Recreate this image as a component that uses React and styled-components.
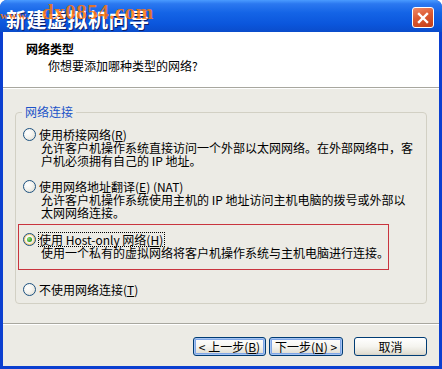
import styled, { createGlobalStyle } from 'styled-components'

const Global = createGlobalStyle`
  html, body { margin: 0; padding: 0; background: #fff; }
  body { font-family: "Noto Sans CJK SC", "DejaVu Sans", sans-serif; font-size: 12px; }
`

const Window = styled.div`
  position: relative;
  width: 442px;
  height: 369px;
  box-sizing: border-box;
  display: flex;
  flex-direction: column;
  background: #0b3fd0;
  border-radius: 7px 7px 0 0;
  overflow: hidden;
`

const TitleBar = styled.div`
  height: 32px;
  flex: none;
  display: flex;
  align-items: center;
  justify-content: space-between;
  padding: 0 8px 0 6px;
  background: linear-gradient(180deg, #4a9bff 0%, #2b78f0 12%, #1464e6 40%, #0b56dc 75%, #0a4ccb 100%);
`

const Title = styled.span`
  color: #fff;
  font-size: 20px;
  font-weight: bold;
  letter-spacing: 0.5px;
  padding-top: 6px;
  text-shadow: 1px 1px 0 #0a1d6a;
`

const Watermark = styled.div`
  position: absolute;
  left: 0;
  top: 0;
  font-family: "Liberation Serif", serif;
  font-weight: bold;
  color: rgba(255, 118, 10, 0.85);
  white-space: nowrap;
  pointer-events: none;
  & small { font-size: 11px; letter-spacing: 1px; }
  & span { font-size: 21px; letter-spacing: 0.5px; margin-left: 12px; }
`

const CloseBtn = styled.div`
  width: 20px;
  height: 19px;
  margin-top: 3px;
  border: 1px solid #fff;
  border-radius: 3px;
  background: linear-gradient(160deg, #f08a68 0%, #dc5a32 45%, #c23c17 100%);
  display: flex;
  align-items: center;
  justify-content: center;
`

const Client = styled.div`
  flex: 1;
  margin: 0 3px 3px;
  background: #ecebe5;
  display: flex;
  flex-direction: column;
`

const Header = styled.div`
  height: 56px;
  flex: none;
  background: #fff;
  padding: 9px 0 0 23px;
  box-sizing: border-box;
  border-bottom: 1px solid #a8a79f;
  box-shadow: 0 1px 0 #fff;
`

const HeadTitle = styled.div`
  font-weight: bold;
  line-height: 15px;
  color: #000;
`

const HeadSub = styled.div`
  margin: 2px 0 0 22px;
  line-height: 15px;
  color: #000;
`

const Body = styled.div`
  flex: 1;
  padding: 17px 12px 0;
`

const Group = styled.fieldset`
  margin: 0;
  padding: 0 0 0 1px;
  height: 199px;
  box-sizing: border-box;
  border: 1px solid #d2d0c4;
  border-radius: 4px;
  display: flex;
  flex-direction: column;
`

const Legend = styled.legend`
  margin-left: 5px;
  padding: 0 3px;
  color: #1d54c8;
  line-height: 14px;
`

const Option = styled.div`
  margin-top: ${p => p.$mt || 0}px;
  padding-left: ${p => (p.$pl == null ? 6 : p.$pl)}px;
  display: grid;
  grid-template-columns: 13px 1fr;
  column-gap: 3px;
  line-height: 13px;
  color: #000;
`

const Radio = styled.span`
  width: 13px;
  height: 13px;
  box-sizing: border-box;
  border-radius: 50%;
  border: 1px solid #1c5180;
  background: radial-gradient(circle at 35% 35%, #fff 0%, #f4f3ee 45%, #d9d6ca 100%);
  display: flex;
  align-items: center;
  justify-content: center;
  &::after {
    content: '';
    display: ${p => (p.$checked ? 'block' : 'none')};
    width: 5px;
    height: 5px;
    border-radius: 50%;
    background: radial-gradient(circle at 35% 35%, #8fe07a 0%, #3ea82a 60%, #218c12 100%);
  }
  ${p => p.$checked && 'box-shadow: inset 0 0 0 1px #f7c86a;'}
`

const Label = styled.span`
  white-space: nowrap;
  ${p => p.$focus && 'outline: 1px dotted #000; outline-offset: 0; justify-self: start; padding-right: 1px;'}
`

const Desc = styled.div`
  grid-column: 2;
  padding-left: 2px;
  white-space: nowrap;
`

const Highlight = styled.div`
  margin: 5px 0 0 1px;
  width: 371px;
  box-sizing: border-box;
  border: 1px solid #c9343e;
  padding: 8px 0 10px;
`

const Footer = styled.div`
  flex: none;
  height: 43px;
  box-sizing: border-box;
  border-top: 1px solid #a8a79f;
  box-shadow: inset 0 1px 0 #fff;
  display: flex;
  justify-content: flex-end;
  align-items: flex-start;
  padding: 13px 12px 0 0;
`

const Button = styled.button`
  width: ${p => p.$w || 73}px;
  height: 19px;
  margin-left: ${p => p.$ml || 0}px;
  padding: 0;
  font-family: inherit;
  font-size: 12px;
  line-height: 15px;
  color: #000;
  border: 1px solid #003c74;
  border-radius: 3px;
  background: linear-gradient(180deg, #ffffff 0%, #f5f4ef 50%, #e2dfd4 90%, #d4d0c4 100%);
  box-shadow: ${p => (p.$hl ? 'inset 0 0 0 1px #a6c4f2, inset 0 0 0 2px #7fa6e6' : 'none')};
  & u { text-decoration: underline; }
`

const Opt = ({ mt, pl, checked, focus, label, lines }) => (
  <Option $mt={mt} $pl={pl}>
    <Radio $checked={checked} />
    <Label $focus={focus}>{label}</Label>
    {lines.map((l, i) => <Desc key={i}>{l}</Desc>)}
  </Option>
)

export default function App() {
  return (
    <>
      <Global />
      <Window>
        <TitleBar>
          <Title>新建虚拟机向导</Title>
          <CloseBtn>
            <svg width="12" height="12" viewBox="0 0 12 12">
              <path d="M2 2 L10 10 M10 2 L2 10" stroke="#fff" strokeWidth="2.4" strokeLinecap="square" />
            </svg>
          </CloseBtn>
        </TitleBar>
        <Watermark><small>www.</small><span>dx0854.com</span></Watermark>
        <Client>
          <Header>
            <HeadTitle>网络类型</HeadTitle>
            <HeadSub>你想要添加哪种类型的网络?</HeadSub>
          </Header>
          <Body>
            <Group>
              <Legend>网络连接</Legend>
              <Opt
                mt={9}
                label={<>使用桥接网络(<u>R</u>)</>}
                lines={['允许客户机操作系统直接访问一个外部以太网网络。在外部网络中，客', '户机必须拥有自己的 IP 地址。']}
              />
              <Opt
                mt={13}
                label={<>使用网络地址翻译(<u>E</u>) (NAT)</>}
                lines={['允许客户机操作系统使用主机的 IP 地址访问主机电脑的拨号或外部以', '太网网络连接。']}
              />
              <Highlight>
                <Opt
                  pl={4}
                  checked
                  focus
                  label={<>使用 Host-only 网络(<u>H</u>)</>}
                  lines={['使用一个私有的虚拟网络将客户机操作系统与主机电脑进行连接。']}
                />
              </Highlight>
              <Opt mt={13} label={<>不使用网络连接(<u>T</u>)</>} lines={[]} />
            </Group>
          </Body>
          <Footer>
            <Button $hl>&lt; 上一步(<u>B</u>)</Button>
            <Button $hl $ml={3} $w={74}>下一步(<u>N</u>) &gt;</Button>
            <Button $ml={11}>取消</Button>
          </Footer>
        </Client>
      </Window>
    </>
  )
}
